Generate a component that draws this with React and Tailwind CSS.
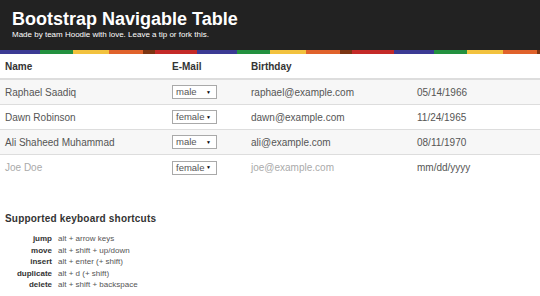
import React from "react";

const stripe = [
  { c: "bg-[#3b3a94]", w: "w-[40px]" },
  { c: "bg-[#23913f]", w: "w-[33px]" },
  { c: "bg-[#f2c23e]", w: "w-[36px]" },
  { c: "bg-[#e0622b]", w: "w-[34px]" },
  { c: "bg-[#7c3512]", w: "w-[12px]" },
  { c: "bg-[#c42a28]", w: "w-[42px]" },
];

const people = [
  { name: "Raphael Saadiq", gender: "male", email: "raphael@example.com", date: "05/14/1966" },
  { name: "Dawn Robinson", gender: "female", email: "dawn@example.com", date: "11/24/1965" },
  { name: "Ali Shaheed Muhammad", gender: "male", email: "ali@example.com", date: "08/11/1970" },
  { name: "Joe Doe", gender: "female", email: "joe@example.com", date: "mm/dd/yyyy", empty: true },
];

const shortcuts = [
  ["jump", "alt + arrow keys"],
  ["move", "alt + shift + up/down"],
  ["insert", "alt + enter (+ shift)"],
  ["duplicate", "alt + d (+ shift)"],
  ["delete", "alt + shift + backspace"],
];

function Select({ value }) {
  return (
    <div className="flex items-center justify-between w-[45px] h-[14px] border border-[#a9a9a9] bg-white pl-[3px] pr-[5px] text-[9.5px] leading-none text-[#555]">
      <span>{value}</span>
      <span className="text-[5px] text-black">▼</span>
    </div>
  );
}

export default function App() {
  return (
    <div
      className="w-[540px] h-[296px] bg-white text-[#555] overflow-hidden"
      style={{ fontFamily: "'Liberation Sans', Arial, sans-serif" }}
    >
      <header className="bg-[#222] h-[50px] px-[12px] pt-[9px] text-white">
        <h1 className="text-[18px] font-bold leading-[20px]">Bootstrap Navigable Table</h1>
        <p className="text-[8px] leading-[10px] mt-[1px]">
          Made by team Hoodie with love. Leave a tip or fork this.
        </p>
      </header>
      <div className="flex h-[4px] overflow-hidden">
        {[0, 1, 2].map((n) =>
          stripe.map((s, i) => (
            <div key={`${n}-${i}`} className={`shrink-0 h-full ${s.c} ${s.w}`} />
          ))
        )}
      </div>

      <div className="mt-[1px] text-[10px]">
        <div className="grid grid-cols-[167px_79px_166px_1fr] h-[25px] items-center border-b-2 border-[#ddd] font-bold text-[#333]">
          <div className="pl-[5px]">Name</div>
          <div className="pl-[5px]">E-Mail</div>
          <div className="pl-[5px]">Birthday</div>
          <div />
        </div>
        {people.map((p, i) => (
          <div
            key={p.name}
            className={`grid grid-cols-[167px_79px_166px_1fr] h-[25px] items-center ${
              i < people.length - 1 ? "border-b border-[#ddd]" : ""
            } ${i % 2 === 0 ? "bg-[#f7f7f7]" : "bg-white"}`}
          >
            <div className={`pl-[5px] ${p.empty ? "text-[#aaa]" : ""}`}>{p.name}</div>
            <div className="pl-[5px]">
              <Select value={p.gender} />
            </div>
            <div className={`pl-[5px] ${p.empty ? "text-[#aaa]" : ""}`}>{p.email}</div>
            <div className="pl-[5px]">{p.date}</div>
          </div>
        ))}
      </div>

      <div className="mt-[33px] px-[5px]">
        <h2 className="text-[10px] font-bold leading-[12px] tracking-[0.2px] text-[#333]">Supported keyboard shortcuts</h2>
        <div className="mt-[8px] grid grid-cols-[47px_1fr] gap-x-[6px] text-[8px] leading-[11.5px]">
          {shortcuts.map(([k, v]) => (
            <React.Fragment key={k}>
              <div className="text-right font-bold text-[#333]">{k}</div>
              <div className="text-[#555]">{v}</div>
            </React.Fragment>
          ))}
        </div>
      </div>
    </div>
  );
}
